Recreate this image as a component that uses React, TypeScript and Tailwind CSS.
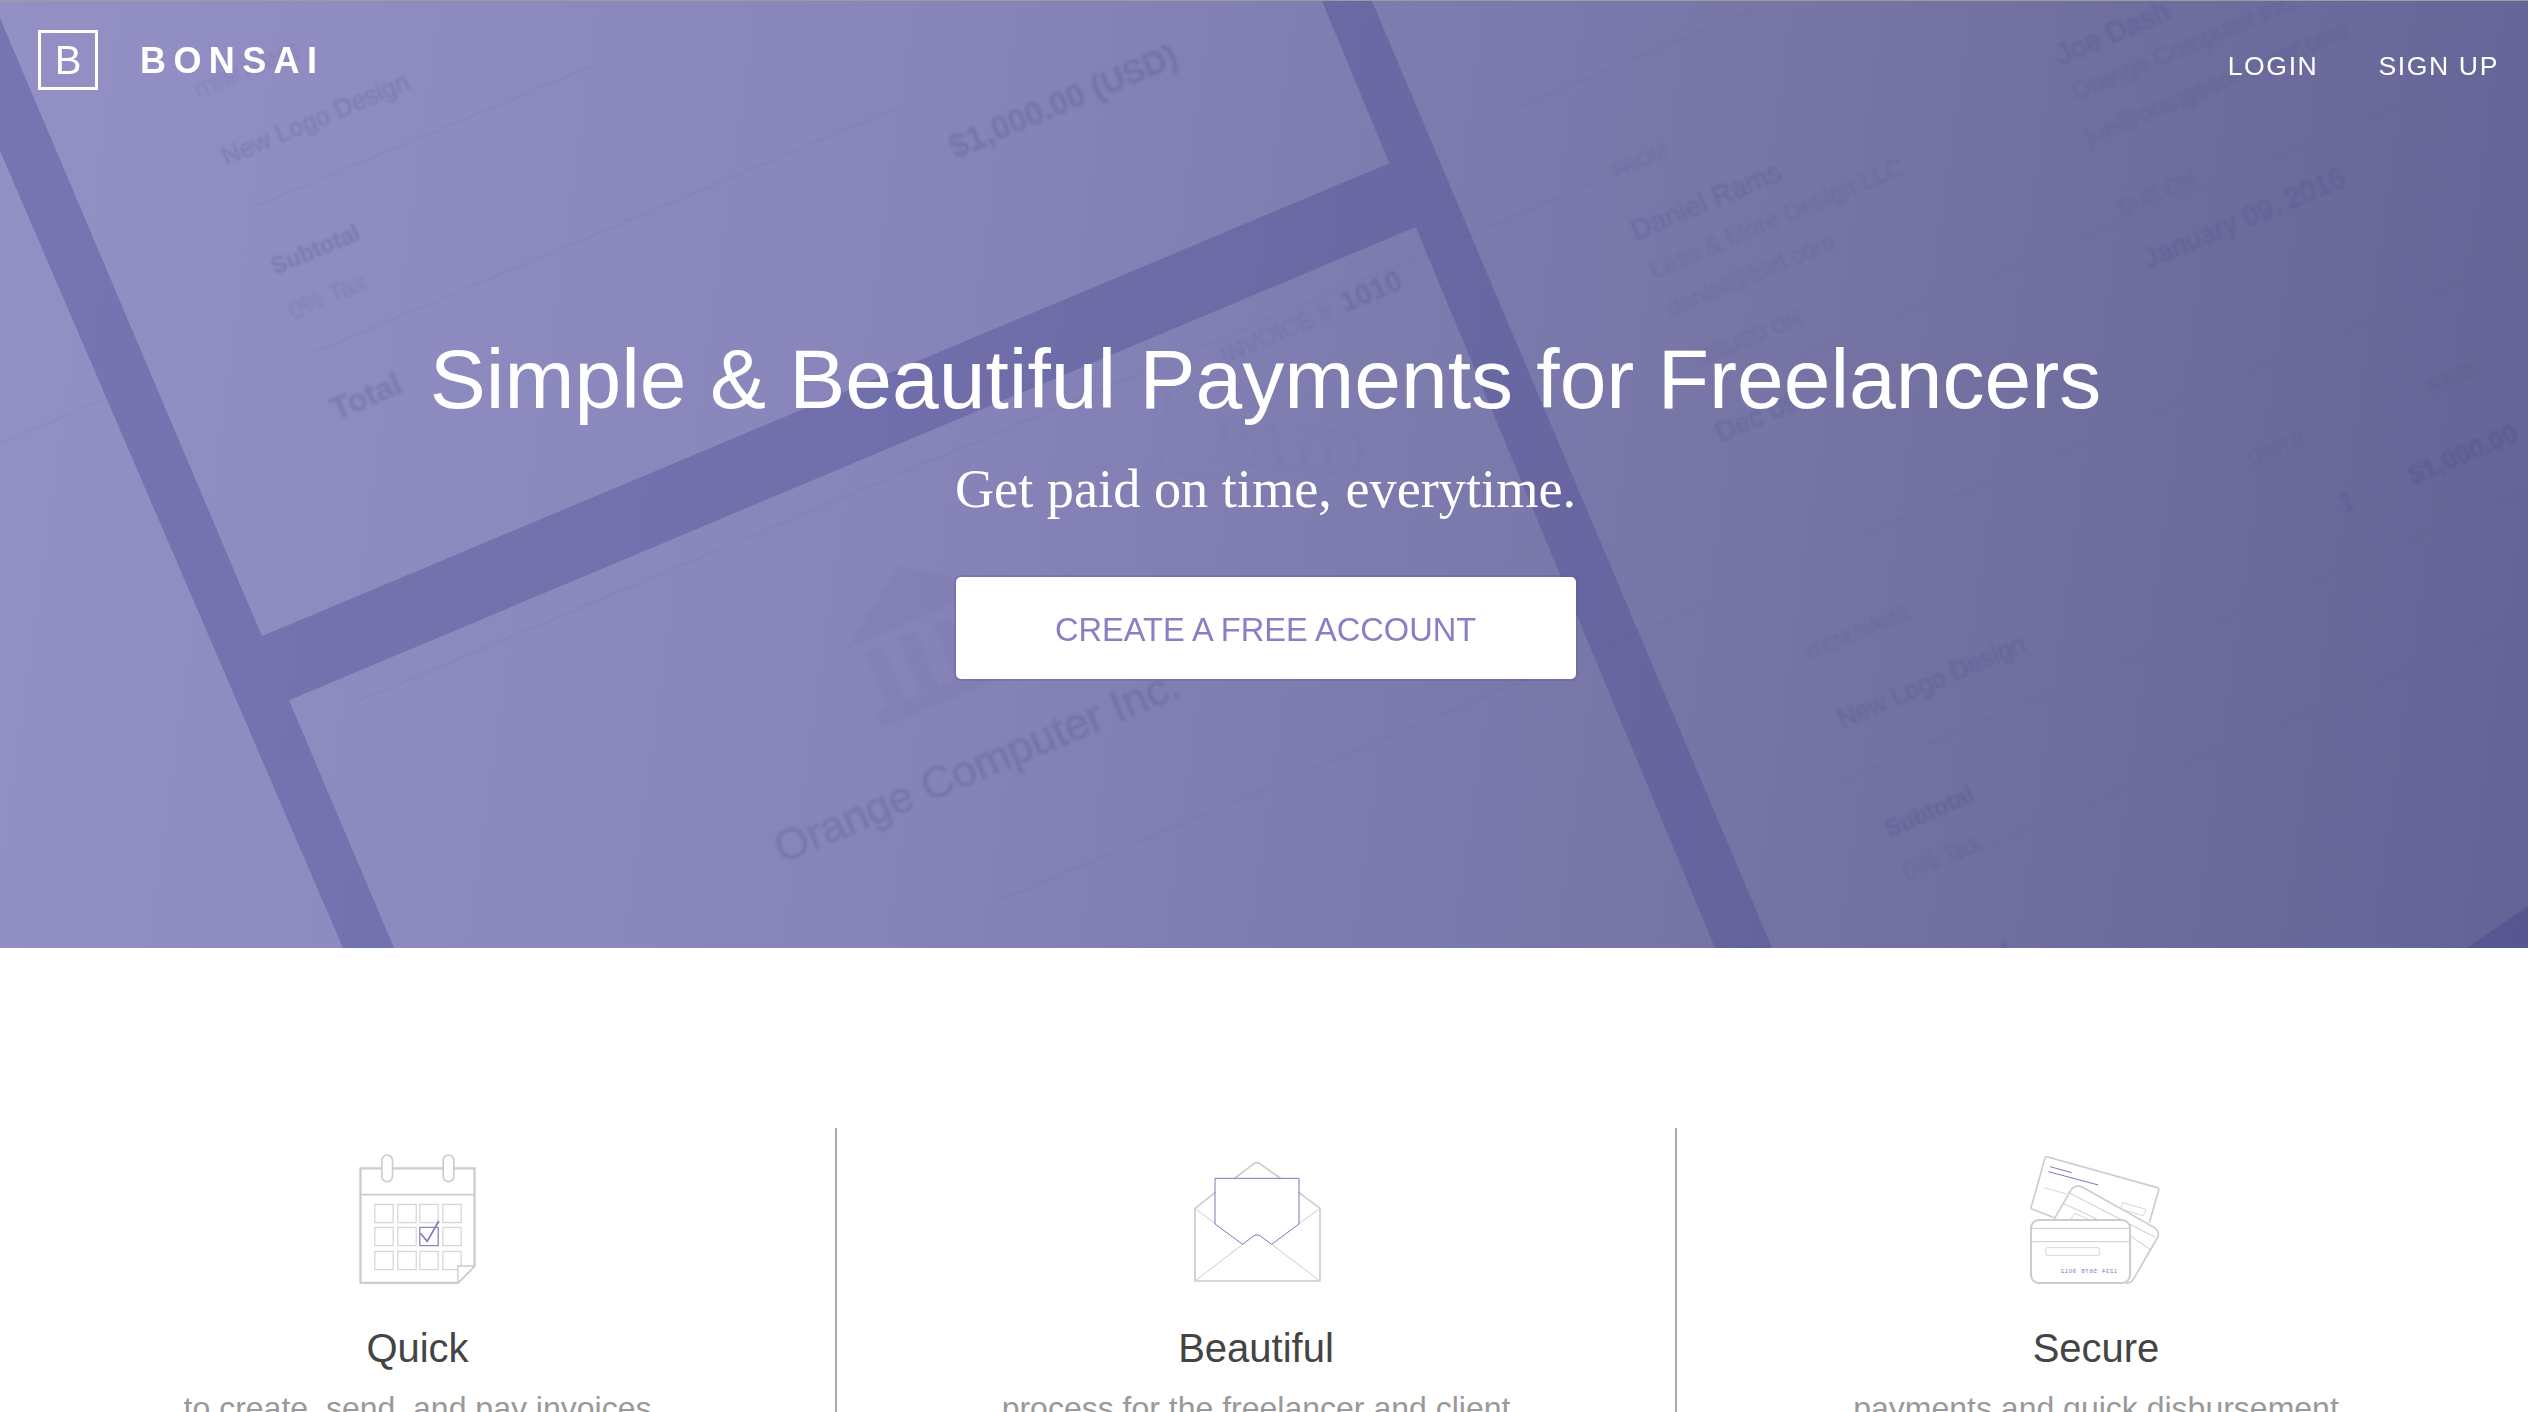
const sans = "font-['Liberation_Sans',Arial,sans-serif]";

type Mark = { text: string; x: number; y: number; size: number; bold?: boolean; dim?: boolean };

// faint invoice copy behind the hero, x/y = start of the baseline
const marks: Mark[] = [
  { text: 'ITEM NAME', x: 198, y: 98, size: 20, dim: true },
  { text: 'New Logo Design', x: 226, y: 165, size: 25.5 },
  { text: 'Subtotal', x: 275, y: 274, size: 23.5, bold: true },
  { text: '0% Tax', x: 293, y: 319, size: 25, dim: true },
  { text: 'Total', x: 336, y: 420, size: 32, bold: true },
  { text: '$1,000.00 (USD)', x: 955, y: 158, size: 32.5, bold: true },
  { text: 'FROM', x: 1615, y: 178, size: 20, dim: true },
  { text: 'Daniel Rams', x: 1636, y: 240, size: 28 },
  { text: 'Less & More Design LLC', x: 1654, y: 278, size: 24.6, dim: true },
  { text: 'daniel@lmd.com', x: 1671, y: 316, size: 24, dim: true },
  { text: 'DUE ON', x: 2122, y: 215, size: 21, dim: true },
  { text: 'January 09, 2016', x: 2148, y: 268, size: 28 },
  { text: 'Joe Dash', x: 2061, y: 64, size: 28.5 },
  { text: 'Orange Computer Inc.', x: 2076, y: 100, size: 24.5, dim: true },
  { text: 'joe@orangecomputer.com', x: 2090, y: 144, size: 24, dim: true },
  { text: 'ISSUED ON', x: 1697, y: 367, size: 21, dim: true },
  { text: 'Dec 09,', x: 1720, y: 442, size: 28 },
  { text: 'UNITS', x: 2251, y: 466, size: 20, dim: true },
  { text: 'RATE', x: 2431, y: 394, size: 20, dim: true },
  { text: '$1,000.00', x: 2413, y: 484, size: 26, bold: true },
  { text: '1', x: 2343, y: 512, size: 26 },
  { text: 'INVOICE #', x: 1225, y: 363, size: 24, dim: true },
  { text: '1010', x: 1345, y: 312, size: 29, bold: true },
  { text: 'Orange Computer Inc.', x: 782, y: 864, size: 44 },
  { text: 'ITEM NAME', x: 1809, y: 660, size: 20, dim: true },
  { text: 'New Logo Design', x: 1842, y: 728, size: 25.5 },
  { text: 'Subtotal', x: 1889, y: 837, size: 23.5, bold: true },
  { text: '0% Tax', x: 1907, y: 880, size: 25, dim: true },
  { text: 'Total', x: 1947, y: 991, size: 32, bold: true },
];

const rules = [
  [252, 207, 590, 66],
  [311, 353, 900, 106],
  [0, 443, 110, 396],
  [360, 700, 1660, 154],
  [1000, 900, 1700, 606],
  [1510, 110, 1760, 5],
  [1740, 380, 2528, 50],
  [1800, 560, 2528, 255],
  [1820, 790, 2528, 490],
  [1930, 870, 2528, 620],
];

function HeroBackdrop() {
  return (
    <svg className="absolute inset-0 h-full w-full" viewBox="0 0 2528 948" preserveAspectRatio="none" aria-hidden="true">
      <defs>
        <filter id="soft">
          <feGaussianBlur stdDeviation="0.8" />
        </filter>
      </defs>
      <g fill="#4a4890" opacity="0.36">
        <path d="M0 17 L0 150 L343 948 L394 948 Z" />
        <path d="M240 645 L1400 158 L1440 216 L270 708 Z" />
        <path d="M1322 0 L1372 0 L1772 948 L1715 948 Z" />
      </g>
      <path d="M2467 948 L2528 906 L2528 948 Z" fill="#4e4c8e" fillOpacity="0.55" />
      {rules.map(([x1, y1, x2, y2], i) => (
        <line key={i} x1={x1} y1={y1} x2={x2} y2={y2} stroke="#4a4890" strokeOpacity="0.05" strokeWidth="2" />
      ))}
      <g filter="url(#soft)" className={sans}>
        {marks.map((m, i) => (
          <text
            key={i}
            x={m.x}
            y={m.y}
            fontSize={m.size}
            fontWeight={m.bold ? 700 : 400}
            fill="#45437f"
            fillOpacity={m.dim ? 0.13 : 0.22}
            transform={`rotate(-22.8 ${m.x} ${m.y})`}
          >
            {m.text}
          </text>
        ))}
        <g transform="translate(848 647) rotate(-22.8)" fill="#45437f" fillOpacity="0.06">
          <path d="M0 0 L78 -54 L156 0 Z" />
          <rect x="14" y="12" width="18" height="58" />
          <rect x="50" y="12" width="18" height="58" />
          <rect x="88" y="12" width="18" height="58" />
          <rect x="124" y="12" width="18" height="58" />
          <rect x="0" y="72" width="156" height="15" />
        </g>
        <g transform="rotate(6 1290 440)">
          <rect x="1164" y="392" width="252" height="92" rx="10" fill="none" stroke="#6f76b6" strokeOpacity="0.15" strokeWidth="3" />
          <text x="1212" y="470" fontSize="70" fill="#6f76b6" fillOpacity="0.18" className="font-['Liberation_Serif',serif]">
            PAID
          </text>
        </g>
      </g>
    </svg>
  );
}

function CalendarIcon() {
  const xs = [223, 292, 358, 427];
  const ys = [253, 322, 394];
  return (
    <svg viewBox="154.5 96 396 396" className="h-[144px] w-[144px]" fill="none" stroke="#cccccc">
      <path d="M472 489 H180 V145 H522 V438 Z" strokeWidth="7" />
      <path d="M180 224 H522" strokeWidth="5" />
      <rect x="244" y="105" width="32" height="80" rx="16" fill="#ffffff" strokeWidth="5" />
      <rect x="428" y="105" width="32" height="80" rx="16" fill="#ffffff" strokeWidth="5" />
      {ys.map((y) => xs.map((x) => <rect key={`${x}-${y}`} x={x} y={y} width="55" height="55" strokeWidth="3" />))}
      <path d="M472 489 V438 H522 Z" fill="#ffffff" strokeWidth="4" />
      <rect x="358" y="322" width="55" height="55" stroke="#7b78bd" strokeWidth="3" />
      <path d="M360 340 L380 364 L415 303" stroke="#7b78bd" strokeWidth="5" />
    </svg>
  );
}

function EnvelopeIcon() {
  return (
    <svg viewBox="270 96 396 396" className="h-[144px] w-[144px]" fill="none" stroke="#cccccc">
      <path d="M285 265 V483 H660 V265" strokeWidth="5" strokeLinejoin="round" />
      <path d="M285 265 L345 218 M405 174 L462 131 Q470 125 479 131 L540 174 M597 218 L660 265" strokeWidth="5" strokeLinecap="round" />
      <path d="M285 265 L345 311 M660 265 L597 311 M285 483 L428 373 M660 483 L515 373" strokeWidth="3" />
      <path d="M428 373 L345 312 V175 H597 V312 L515 373 L480 347 Q471 342 462 347 Z" stroke="#7b78bd" strokeWidth="3" strokeLinejoin="round" />
    </svg>
  );
}

function CardsIcon() {
  return (
    <svg viewBox="390 96 396 396" className="h-[144px] w-[144px]" fill="none" stroke="#cccccc">
      <path d="M460 292 L397 268 Q392 265 394 260 L435 114 Q437 108 443 111 L772 203 Q778 205 776 211 L748 308" strokeWidth="5" />
      <path d="M432 203 L500 222" strokeWidth="2.5" />
      <path d="M450 140 L515 158 M445 155 L595 195" stroke="#7b78bd" strokeWidth="3" />
      <path d="M668 248 L738 268 L730 287 L662 267 Z" strokeWidth="2.5" />
      <path d="M462 298 L512 212 Q525 192 548 202 L762 322 Q782 336 772 354 L700 478 Q692 490 678 490" strokeWidth="5" />
      <path d="M503 216 L766 352 M490 250 L592 298 M692 348 L750 388" strokeWidth="3" />
      <path d="M512 298 L525 280 L565 298" strokeWidth="2.5" />
      <rect x="393" y="300" width="297" height="189" rx="24" strokeWidth="6" fill="#ffffff" />
      <path d="M393 325 H690 M393 365 H690" strokeWidth="3" />
      <rect x="437" y="383" width="161" height="23" rx="4" strokeWidth="2.5" />
      <text
        transform="translate(652 460) scale(-1 1)"
        fontSize="18"
        letterSpacing="2"
        xmlSpace="preserve"
        fill="#7b78bd"
        stroke="none"
        className={sans}
      >
        1234  5678  9012
      </text>
    </svg>
  );
}

const features = [
  { title: 'Quick', text: 'to create, send, and pay invoices', icon: <CalendarIcon />, width: 'w-[835px]' },
  { title: 'Beautiful', text: 'process for the freelancer and client', icon: <EnvelopeIcon />, width: 'w-[840px] border-l-2' },
  { title: 'Secure', text: 'payments and quick disbursement', icon: <CardsIcon />, width: 'w-[840px] border-l-2' },
];

export default function App() {
  return (
    <div className={`h-[1412px] w-[2528px] overflow-hidden bg-white ${sans}`}>
      <section className="relative h-[948px] border-t border-[#9c9c9c] bg-[linear-gradient(98deg,#9290c5_0%,#8785ba_35%,#7675a6_68%,#646395_100%)]">
        <HeroBackdrop />
        <div className="relative">
          <header className="flex items-center justify-between pt-[29px] pl-[38px] pr-[29px]">
            <a className="flex items-center gap-[42px] text-white">
              <span className="flex h-[60px] w-[60px] items-center justify-center border-[3px] border-white text-[40px] leading-none">B</span>
              <span className="mt-[2px] text-[36px] leading-none font-bold tracking-[7.4px]">BONSAI</span>
            </a>
            <nav className="mt-[14px] flex gap-[60px] text-[26.6px] tracking-[1.6px] text-white">
              <a>LOGIN</a>
              <a>SIGN UP</a>
            </nav>
          </header>
          <div className="mt-[247px] flex flex-col items-center pl-[3px] text-white">
            <h1 className="text-[84px] leading-[84px] font-normal">Simple &amp; Beautiful Payments for Freelancers</h1>
            <p className="mt-[37px] font-['Liberation_Serif',serif] text-[54.3px] leading-[62px]">Get paid on time, everytime.</p>
            <button className="mt-[57px] h-[102px] w-[620px] rounded-[5px] bg-white pt-[4px] text-[32.6px] text-[#8a7fc4] shadow-[0_0_0_2px_rgba(80,78,140,0.22)]">
              CREATE A FREE ACCOUNT
            </button>
          </div>
        </div>
      </section>
      <section className="flex pt-[180px]">
        {features.map((f) => (
          <div key={f.title} className={`flex h-[300px] flex-col items-center border-[#aaaaaa] pt-[24px] ${f.width}`}>
            {f.icon}
            <h3 className="mt-[40px] text-[40px] leading-[48px] font-normal text-[#444444]">{f.title}</h3>
            <p className="mt-[16px] text-[32px] leading-[40px] text-[#999999]">{f.text}</p>
          </div>
        ))}
      </section>
    </div>
  );
}
